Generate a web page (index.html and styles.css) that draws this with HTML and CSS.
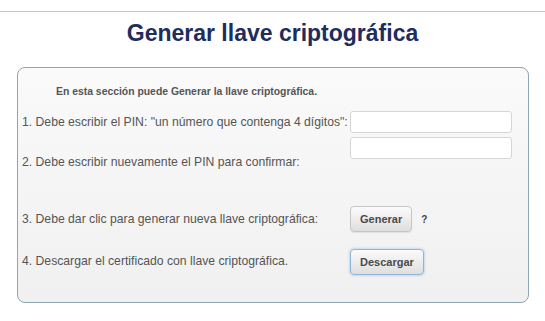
FILE: index.html
```html
<!DOCTYPE html>
<html lang="es">
<head>
  <meta charset="UTF-8">
  <meta name="viewport" content="width=device-width, initial-scale=1.0">
  <title>Generar llave criptográfica</title>
  <link rel="stylesheet" href="styles.css">
</head>
<body>
  <div class="topline"></div>
  <h1 class="title">Generar llave criptográfica</h1>

  <div class="panel">
    <p class="intro">En esta sección puede Generar la llave criptográfica.</p>

    <div class="row row-pin">
      <label class="label" for="pin">1. Debe escribir el PIN: "un número que contenga 4 dígitos":</label>
      <input class="field" type="password" id="pin">
    </div>

    <div class="row row-confirm">
      <label class="label" for="pin2">2. Debe escribir nuevamente el PIN para confirmar:</label>
      <input class="field" type="password" id="pin2">
    </div>

    <div class="row row-gen">
      <span class="label">3. Debe dar clic para generar nueva llave criptográfica:</span>
      <button class="btn" type="button">Generar</button>
      <span class="help">?</span>
    </div>

    <div class="row row-down">
      <span class="label">4. Descargar el certificado con llave criptográfica.</span>
      <button class="btn btn-focus" type="button">Descargar</button>
    </div>
  </div>
</body>
</html>
```

FILE: styles.css
```css
body {
  margin: 0;
  padding: 0;
  background: #ffffff;
  font-family: "Liberation Sans", Arial, sans-serif;
  color: #555555;
}

.topline {
  height: 11px;
  border-bottom: 1px solid #c4c4c4;
}

.title {
  margin: 7px 0 0 0;
  font-size: 23px;
  line-height: 28px;
  font-weight: bold;
  text-align: center;
  color: #1f2d5c;
}

.panel {
  margin: 20px 0 0 17px;
  width: 510px;
  height: 234px;
  border: 1px solid #8ea6b4;
  border-radius: 8px;
  background: linear-gradient(#fafafa, #f0f0f0);
  box-sizing: content-box;
}

.intro {
  margin: 18px 0 0 38px;
  font-size: 10.4px;
  line-height: 12px;
  font-weight: bold;
  color: #555555;
}

.row {
  display: flex;
  align-items: center;
  padding-left: 4px;
}

.label {
  width: 328px;
  flex: none;
  font-size: 12.2px;
  line-height: 14px;
  color: #555555;
}

.field {
  width: 162px;
  height: 22px;
  box-sizing: border-box;
  margin: 0;
  border: 1px solid #d6d6d6;
  border-radius: 3px;
  background: #ffffff;
}

.row-pin {
  margin-top: 13px;
}

.row-confirm {
  margin-top: 4px;
  align-items: flex-start;
}

.row-confirm .label {
  margin-top: 18px;
}

.row-gen {
  margin-top: 37px;
}

.row-down {
  margin-top: 17px;
}

.row-down .label {
  margin-bottom: 3px;
}

.btn {
  height: 26px;
  margin: 0;
  padding: 0 9px;
  font-family: "Liberation Sans", Arial, sans-serif;
  font-size: 11px;
  font-weight: bold;
  color: #4a4a4a;
  border: 1px solid #c6c6c6;
  border-radius: 4px;
  background: linear-gradient(#fbfbfb, #dedede);
  box-shadow: 0 1px 1px rgba(0, 0, 0, 0.08);
}

.btn-focus {
  border-color: #8fb4d6;
  box-shadow: 0 0 3px rgba(90, 150, 210, 0.55);
}

.help {
  margin-left: 9px;
  font-size: 10px;
  font-weight: bold;
  color: #444444;
}
```
